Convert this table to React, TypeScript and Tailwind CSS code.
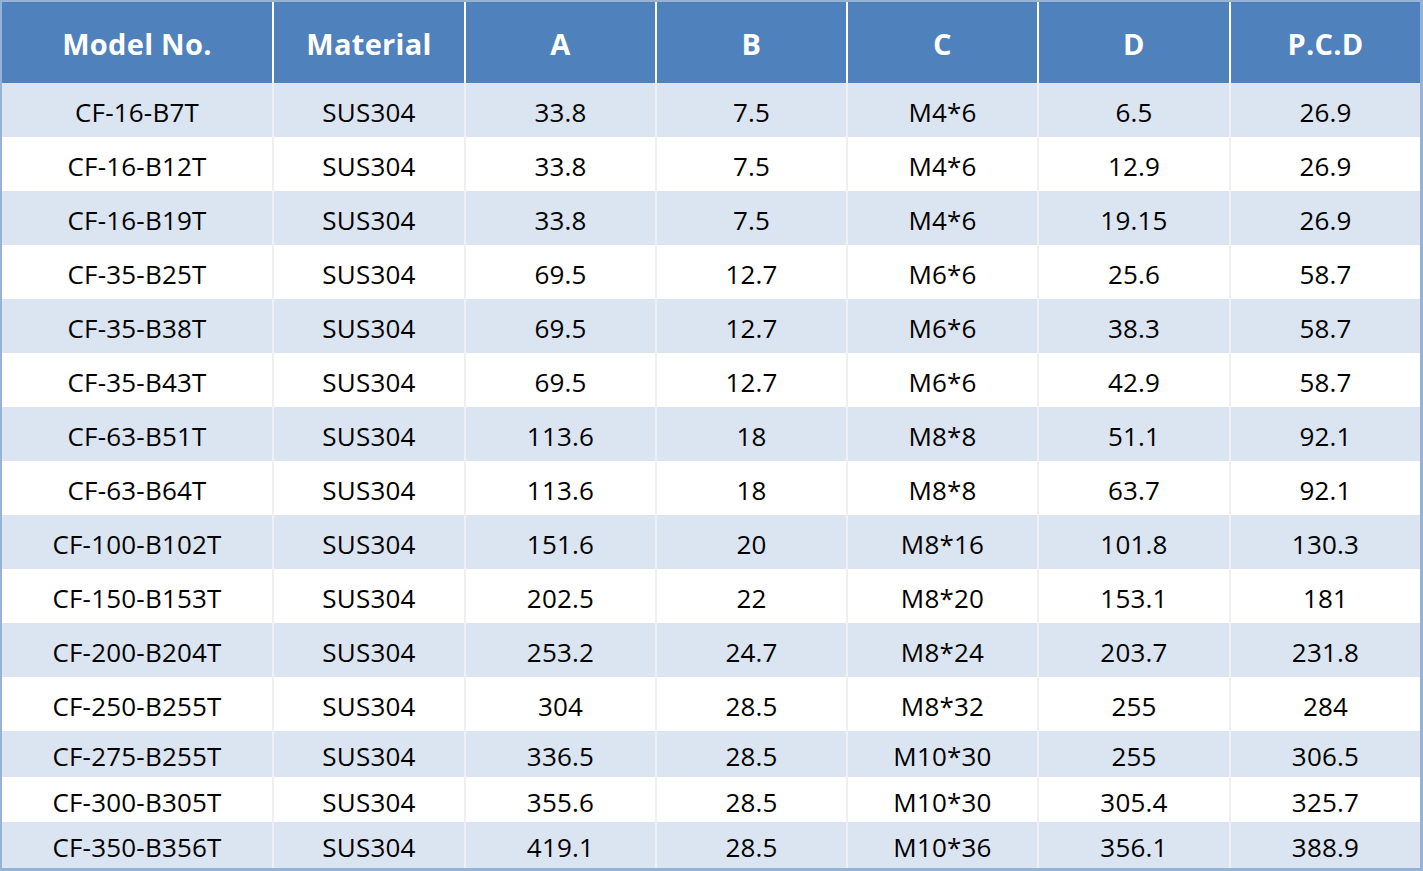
import React from 'react';

const rows: string[][] = [
  ['CF-16-B7T', 'SUS304', '33.8', '7.5', 'M4*6', '6.5', '26.9'],
  ['CF-16-B12T', 'SUS304', '33.8', '7.5', 'M4*6', '12.9', '26.9'],
  ['CF-16-B19T', 'SUS304', '33.8', '7.5', 'M4*6', '19.15', '26.9'],
  ['CF-35-B25T', 'SUS304', '69.5', '12.7', 'M6*6', '25.6', '58.7'],
  ['CF-35-B38T', 'SUS304', '69.5', '12.7', 'M6*6', '38.3', '58.7'],
  ['CF-35-B43T', 'SUS304', '69.5', '12.7', 'M6*6', '42.9', '58.7'],
  ['CF-63-B51T', 'SUS304', '113.6', '18', 'M8*8', '51.1', '92.1'],
  ['CF-63-B64T', 'SUS304', '113.6', '18', 'M8*8', '63.7', '92.1'],
  ['CF-100-B102T', 'SUS304', '151.6', '20', 'M8*16', '101.8', '130.3'],
  ['CF-150-B153T', 'SUS304', '202.5', '22', 'M8*20', '153.1', '181'],
  ['CF-200-B204T', 'SUS304', '253.2', '24.7', 'M8*24', '203.7', '231.8'],
  ['CF-250-B255T', 'SUS304', '304', '28.5', 'M8*32', '255', '284'],
  ['CF-275-B255T', 'SUS304', '336.5', '28.5', 'M10*30', '255', '306.5'],
  ['CF-300-B305T', 'SUS304', '355.6', '28.5', 'M10*30', '305.4', '325.7'],
  ['CF-350-B356T', 'SUS304', '419.1', '28.5', 'M10*36', '356.1', '388.9'],
];

const headers = ['Model No.', 'Material', 'A', 'B', 'C', 'D', 'P.C.D'];

// the last three rows are shorter than the rest
const rowHeights = ['h-[54px]', 'h-[54px]', 'h-[54px]', 'h-[54px]', 'h-[54px]', 'h-[54px]', 'h-[54px]', 'h-[54px]', 'h-[54px]', 'h-[54px]', 'h-[54px]', 'h-[54px]', 'h-[46px]', 'h-[45px]', 'h-[46px]'];

const cols = 'grid grid-cols-[270px_192px_191px_191px_191px_192px_191px]';

export default function App() {
  return (
    <div className="w-[1423px] h-[871px] bg-white font-['Open_Sans',sans-serif]">
      <div className="border-l-2 border-t-2 border-r-[3px] border-b-[3px] border-[#95b3d7]">
        {/* HEADER */}
        <div className={`${cols} h-[81px] bg-[#4f81bd]`}>
          {headers.map((h, i) => (
            <div
              key={h}
              className={`flex items-center justify-center pt-[3px] text-white font-bold text-[29px] tracking-[0.3px] ${i > 0 ? 'border-l-2 border-white' : ''}`}
            >
              {h}
            </div>
          ))}
        </div>

        {/* BODY */}
        {rows.map((r, ri) => (
          <div key={r[0]} className={`${cols} ${rowHeights[ri]} ${ri % 2 === 0 ? 'bg-[#dbe5f1]' : 'bg-white'}`}>
            {r.map((c, ci) => (
              <div
                key={ci}
                className={`flex items-center justify-center pt-[5px] text-[26px] tracking-[0.2px] text-black ${ci > 0 ? 'border-l-2 border-[#eef0f3]' : ''}`}
              >
                {c}
              </div>
            ))}
          </div>
        ))}
      </div>
    </div>
  );
}
